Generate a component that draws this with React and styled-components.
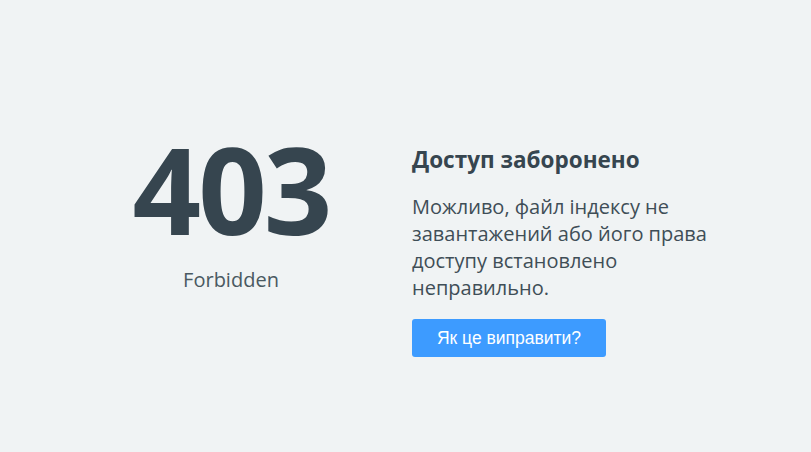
import React from "react";
import styled, { createGlobalStyle } from "styled-components";

const Global = createGlobalStyle`
  html, body { margin: 0; padding: 0; }
  body {
    background: #f0f3f4;
    font-family: "Open Sans", "Noto Sans", sans-serif;
    color: #36454f;
  }
`;

const Page = styled.main`
  min-height: 100vh;
  box-sizing: border-box;
  display: flex;
  align-items: flex-start;
  padding: 107px 0 0 111px;
`;

const CodeColumn = styled.section`
  width: 240px;
  margin-right: 61px;
  display: flex;
  flex-direction: column;
  align-items: center;
`;

const Code = styled.div`
  font-size: 120px;
  line-height: 163px;
  font-weight: 700;
  color: #36454f;
  letter-spacing: -3px;
`;

const CodeLabel = styled.div`
  font-size: 20px;
  line-height: 20px;
  color: #4a5961;
`;

const InfoColumn = styled.section`
  width: 320px;
  padding-top: 40px;
  display: flex;
  flex-direction: column;
  align-items: flex-start;
`;

const Title = styled.h1`
  margin: 0;
  font-size: 22.5px;
  line-height: 26px;
  font-weight: 700;
  color: #36454f;
`;

const Text = styled.p`
  margin: 20px 0 0;
  width: 300px;
  font-size: 20px;
  line-height: 27px;
  color: #3f4e57;
`;

const FixButton = styled.a`
  margin-top: 18px;
  width: 194px;
  height: 38px;
  display: flex;
  align-items: center;
  justify-content: center;
  background: #3d9bff;
  border-radius: 3px;
  color: #ffffff;
  font-family: "Liberation Sans", Arial, sans-serif;
  font-size: 17.5px;
  text-decoration: none;
`;

export default function App() {
  return (
    <>
      <Global />
      <Page>
        <CodeColumn>
          <Code>403</Code>
          <CodeLabel>Forbidden</CodeLabel>
        </CodeColumn>
        <InfoColumn>
          <Title>Доступ заборонено</Title>
          <Text>
            Можливо, файл індексу не завантажений або його права доступу
            встановлено неправильно.
          </Text>
          <FixButton href="#">Як це виправити?</FixButton>
        </InfoColumn>
      </Page>
    </>
  );
}
